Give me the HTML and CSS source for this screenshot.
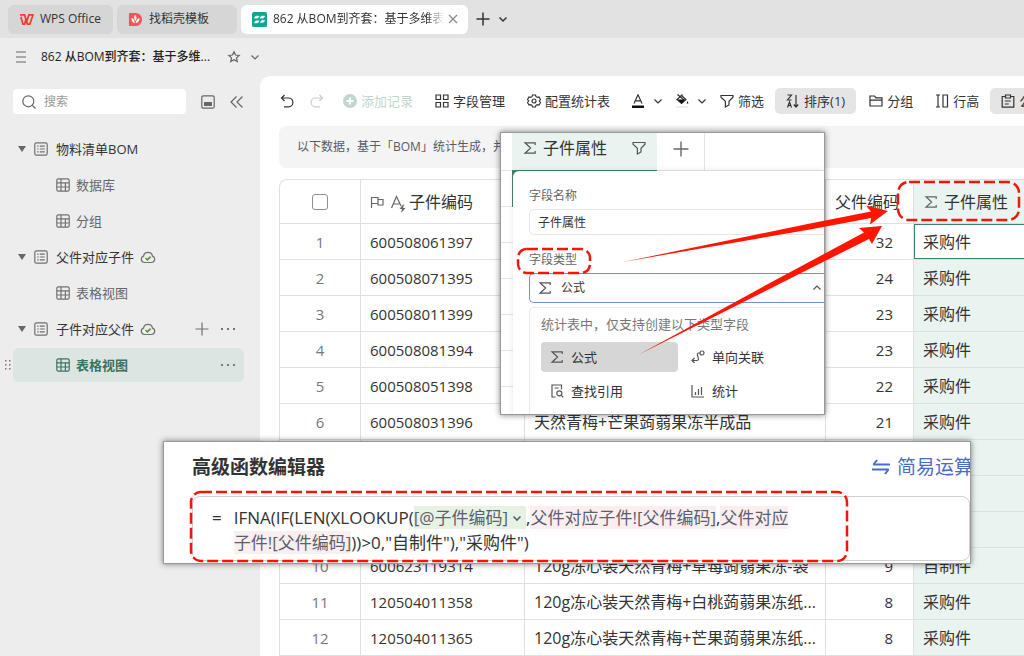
FILE: index.html
```
<!DOCTYPE html>
<html lang="zh-CN">
<head>
    <meta charset="UTF-8">
    <meta name="viewport" content="width=device-width, initial-scale=1.0">
    <title>862 从BOM到齐套：基于多维表格</title>
    <link rel="stylesheet" href="styles.css">
</head>
<body>
    <!-- shared icons -->
    <svg class="sprite" aria-hidden="true">
        <symbol id="i-sigma" viewBox="0 0 14 14"><path d="M12.2 4V1.8H2l5.6 5.2L2 12.2h10.2V10"/></symbol>
        <symbol id="i-down" viewBox="0 0 14 14"><path d="M3.5 5.5 7 9l3.5-3.5"/></symbol>
        <symbol id="i-filter" viewBox="0 0 14 14"><path d="M1 1.5h12v1.8L9 7.2V11l-3.6 2V7.2L1 3.3z"/></symbol>
        <symbol id="i-plus" viewBox="0 0 14 14"><path d="M7 0.5v13M0.5 7h13"/></symbol>
        <symbol id="i-sheet" viewBox="0 0 14 14"><rect x="0.8" y="0.8" width="12.4" height="12.4" rx="1.6"/><path d="M3.2 4.2h1.4M5.8 4.2h5M3.2 7h1.4M5.8 7h5M3.2 9.8h1.4M5.8 9.8h5"/></symbol>
        <symbol id="i-table" viewBox="0 0 14 14"><rect x="0.8" y="0.8" width="12.4" height="12.4" rx="1.6"/><path d="M1 4.8h12M1 9h12M5 1v12M9.4 5v8"/></symbol>
        <symbol id="i-cloud" viewBox="0 0 16 14"><path d="M4.5 12.5a3.3 3.3 0 0 1-1-6.4 4.6 4.6 0 0 1 9 0 3.3 3.3 0 0 1-1 6.4z"/><path class="tick" d="M5.6 8 7.4 9.8 10.6 6.6"/></symbol>
        <symbol id="i-dots" viewBox="0 0 14 14"><path class="fill" d="M0 6h2v2H0zM6 6h2v2H6zM12 6h2v2h-2z"/></symbol>
    </svg>

    <nav class="tabs">
        <a class="tab" href="#">
            <svg class="logo" viewBox="0 0 16 14"><path d="M1 2h5l2 8 2.500-8H15l-3.500 10H9L7.500 6 6 12H4.200L2 4" fill="none" stroke="#f43a2c" stroke-width="1.8" stroke-linejoin="round"/></svg>
            WPS Office
        </a>
        <a class="tab tab-docer" href="#">
            <svg class="logo" viewBox="0 0 16 16"><path d="M2 1h6a7 7 0 0 1 0 14H2a1 1 0 0 1-1-1V2a1 1 0 0 1 1-1z" fill="#f2545b"/><path d="M7.500 3c2 2 2 4 .5 6.500C6 7 6 5 7.500 3zM3.800 6.500c2 .5 3 2 3.500 5.500-2.500-.8-3.700-2.500-3.500-5.500zM12.200 6.500c.2 3-1.200 4.700-4 5.500 0-2.500 1.500-5 4-5.500z" fill="#fff"/></svg>
            找稻壳模板
        </a>
        <a class="tab tab-active" href="#">
            <svg class="logo" viewBox="0 0 16 16"><rect width="16" height="16" rx="2" fill="#0ea890"/><path d="M2.500 6.500 4 4.500h3.500L6 6.500zM8.500 6.500l1.500-2h3.500L12 6.500zM2.500 11.500l1.500-2h3.500l-1.500 2zM9 11l1.500-2h3L12 11z" fill="#fff" stroke="#fff" stroke-width=".8"/></svg>
            <span class="tab-title">862 从BOM到齐套：基于多维表格</span>
            <svg class="icon close" viewBox="0 0 14 14"><path d="M3 3l8 8M11 3l-8 8"/></svg>
        </a>
        <button class="bare" aria-label="新建"><svg class="icon dark"><use href="#i-plus"/></svg></button>
        <button class="bare" aria-label="更多"><svg class="icon dark"><use href="#i-down"/></svg></button>
    </nav>

    <header class="doc-bar">
        <button class="bare" aria-label="菜单"><svg class="icon" viewBox="0 0 14 14"><path d="M2 2h10M2 7h10M2 12h10"/></svg></button>
        <h1 class="doc-title">862 从BOM到齐套：基于多维...</h1>
        <button class="bare" aria-label="收藏"><svg class="icon" viewBox="0 0 14 14"><path d="M7 1.700 8.500 5l3.700.4-2.700 2.500.8 3.600L7 9.700l-3.300 1.800.8-3.600L1.800 5.400 5.500 5z"/></svg></button>
        <button class="bare" aria-label="展开"><svg class="icon"><use href="#i-down"/></svg></button>
    </header>

    <div class="workspace">
        <aside class="sidebar">
            <div class="search-row">
                <label class="search">
                    <svg class="icon" viewBox="0 0 14 14"><circle cx="6.300" cy="6.300" r="5.500"/><path d="M10.300 10.300 13.500 13.500"/></svg>
                    <input type="text" placeholder="搜索" aria-label="搜索">
                </label>
                <button class="bare" aria-label="面板"><svg class="icon" viewBox="0 0 14 14"><rect x="0.8" y="0.8" width="12.400" height="12.400" rx="1.500"/><path class="fill" d="M3 7h8v4H3z"/></svg></button>
                <button class="bare" aria-label="收起"><svg class="icon" viewBox="0 0 14 14"><path d="M6.500 1.500 1 7l5.500 5.500M12.500 1.500 7 7l5.500 5.500"/></svg></button>
            </div>
            <ul class="tree">
                <li class="node"><span class="caret"></span><svg class="icon"><use href="#i-sheet"/></svg><a href="#">物料清单BOM</a></li>
                <li class="node child"><svg class="icon"><use href="#i-table"/></svg><a href="#">数据库</a></li>
                <li class="node child"><svg class="icon"><use href="#i-table"/></svg><a href="#">分组</a></li>
                <li class="node"><span class="caret"></span><svg class="icon"><use href="#i-sheet"/></svg><a href="#">父件对应子件</a><svg class="icon cloud"><use href="#i-cloud"/></svg></li>
                <li class="node child"><svg class="icon"><use href="#i-table"/></svg><a href="#">表格视图</a></li>
                <li class="node"><span class="caret"></span><svg class="icon"><use href="#i-sheet"/></svg><a href="#">子件对应父件</a><svg class="icon cloud"><use href="#i-cloud"/></svg>
                    <span class="actions"><svg class="icon"><use href="#i-plus"/></svg><svg class="icon"><use href="#i-dots"/></svg></span></li>
                <li class="node child selected">
                    <svg class="handle" viewBox="0 0 6 10"><path d="M0 0h1.500v1.500H0zM4 0h1.500v1.500H4zM0 4h1.500v1.500H0zM4 4h1.500v1.500H4zM0 8h1.500v1.500H0zM4 8h1.500v1.500H4z" fill="#777"/></svg>
                    <svg class="icon"><use href="#i-table"/></svg><a href="#">表格视图</a>
                    <span class="actions"><svg class="icon gray"><use href="#i-dots"/></svg></span></li>
            </ul>
        </aside>

        <main class="main">
            <div class="toolbar">
                <button class="tool tool-icon" aria-label="撤销"><svg class="icon" viewBox="0 0 14 14"><path d="M4.500 1 1.500 4l3 3M1.500 4h7a4.300 4.300 0 0 1 0 8.800H4"/></svg></button>
                <button class="tool tool-icon faint" aria-label="重做"><svg class="icon" viewBox="0 0 14 14"><path d="M9.500 1l3 3-3 3M12.500 4h-7a4.300 4.300 0 0 0 0 8.800H10"/></svg></button>
                <button class="tool disabled"><svg class="icon" viewBox="0 0 14 14"><circle class="fill" cx="7" cy="7" r="7"/><path d="M7 3.500v7M3.500 7h7" stroke="#fff" stroke-width="1.800"/></svg>添加记录</button>
                <button class="tool"><svg class="icon" viewBox="0 0 14 14"><path d="M1 1h4.500v4.500H1zM8.500 1H13v4.500H8.500zM1 8.500h4.500V13H1zM8.500 8.500H13V13H8.500z"/></svg>字段管理</button>
                <button class="tool"><svg class="icon" viewBox="0 0 14 14"><path d="M5.500 1h3l.5 1.700 1.300.7 1.700-.4 1.500 2.500L12.300 7l1.200 1.500L12 11l-1.700-.4-1.300.7-.5 1.700h-3L5 11.300l-1.300-.7L2 11 .5 8.500 1.700 7 .5 5.500 2 3l1.700.4L5 2.700z"/><circle cx="7" cy="7" r="2"/></svg>配置统计表</button>
                <button class="tool tool-drop" aria-label="字体颜色"><svg class="icon" viewBox="0 0 14 14"><path d="M3 9.500 7 .8l4 8.700M4.300 6.800h5.400"/><path class="black" d="M1 11.500h12V14H1z"/></svg><svg class="icon"><use href="#i-down"/></svg></button>
                <button class="tool tool-drop" aria-label="填充颜色"><svg class="icon" viewBox="0 0 14 14"><path d="M2.500.5 9 6M7.500.5 2 5.500l4.500 4L11 5.500 6.500 1.500"/><path class="black" d="M2.500 5.500h8l-4 4zM12.500 7l1 2.500h-2z"/><path d="M1 13h12" stroke="#ddd"/></svg><svg class="icon"><use href="#i-down"/></svg></button>
                <button class="tool"><svg class="icon"><use href="#i-filter"/></svg>筛选</button>
                <button class="tool tool-on"><svg class="icon" viewBox="0 0 14 14"><path d="M1.500 1h4L1.500 6h4M1.500 13.500l2-5.500 2 5.500M2.200 11.500h2.600M10 1v12M7.800 10.500 10 13l2.200-2.500"/></svg>排序(1)</button>
                <button class="tool"><svg class="icon" viewBox="0 0 14 14"><path d="M1 12V2h4.500L7 3.800h6V12zM1 6.200h12"/></svg>分组</button>
                <button class="tool"><svg class="icon" viewBox="0 0 14 14"><path d="M1 1h4M3 1v12M1 13h4M8 1h4.500v12H8z"/></svg>行高</button>
                <button class="tool tool-on"><svg class="icon" viewBox="0 0 14 14"><path d="M4.500 2.500H1.200v10.700h11.600V2.500H9.500M4.500 1h5v3h-5zM3.800 7h6M3.800 10h4"/></svg>公式</button>
            </div>
            <p class="notice">以下数据，基于「BOM」统计生成，并</p>
            <div class="grid">
                <table>
                    <colgroup><col class="c-no"><col class="c-code"><col class="c-name"><col class="c-parent"><col></colgroup>
                    <thead>
                        <tr>
                            <th class="no"><input type="checkbox" aria-label="全选"></th>
                            <th><svg class="icon" viewBox="0 0 14 14"><path d="M1.500 13V2.500h6.500V8.500H1.500M8 4.500h5v5.500H8V8"/></svg><svg class="icon auto" viewBox="0 0 16 18"><path d="M1.500 13 6.500 1.500 11 11M3.300 9h6"/><path class="fill" d="M13 9.500 9.500 14h2.500l-1 4 4.500-5h-2.500l1-3.500z"/></svg>子件编码</th>
                            <th></th>
                            <th>父件编码</th>
                            <th class="attr"><svg class="icon"><use href="#i-sigma"/></svg>子件属性</th>
                        </tr>
                    </thead>
                    <tbody>
                        <tr><td class="no">1</td><td>600508061397</td><td></td><td class="num">32</td><td class="attr current">采购件</td></tr>
                        <tr><td class="no">2</td><td>600508071395</td><td></td><td class="num">24</td><td class="attr">采购件</td></tr>
                        <tr><td class="no">3</td><td>600508011399</td><td></td><td class="num">23</td><td class="attr">采购件</td></tr>
                        <tr><td class="no">4</td><td>600508081394</td><td></td><td class="num">23</td><td class="attr">采购件</td></tr>
                        <tr><td class="no">5</td><td>600508051398</td><td></td><td class="num">22</td><td class="attr">采购件</td></tr>
                        <tr><td class="no">6</td><td>600508031396</td><td>天然青梅+芒果蒟蒻果冻半成品</td><td class="num">21</td><td class="attr">采购件</td></tr>
                        <tr><td class="no"></td><td></td><td></td><td></td><td class="attr"></td></tr>
                        <tr><td class="no"></td><td></td><td></td><td></td><td class="attr"></td></tr>
                        <tr><td class="no"></td><td></td><td></td><td></td><td class="attr"></td></tr>
                        <tr><td class="no">10</td><td>600623119314</td><td>120g冻心装天然青梅+草莓蒟蒻果冻-袋</td><td class="num">9</td><td class="attr">自制件</td></tr>
                        <tr><td class="no">11</td><td>120504011358</td><td>120g冻心装天然青梅+白桃蒟蒻果冻纸...</td><td class="num">8</td><td class="attr">采购件</td></tr>
                        <tr><td class="no">12</td><td>120504011365</td><td>120g冻心装天然青梅+芒果蒟蒻果冻纸...</td><td class="num">8</td><td class="attr">采购件</td></tr>
                    </tbody>
                </table>
            </div>
        </main>
    </div>

    <!-- field settings -->
    <section class="panel field-panel">
        <div class="field-head">
            <div class="field-name"><svg class="icon"><use href="#i-sigma"/></svg>子件属性<svg class="icon push"><use href="#i-filter"/></svg></div>
            <button class="field-add" aria-label="添加字段"><svg class="icon"><use href="#i-plus"/></svg></button>
        </div>
        <div class="field-body">
            <form class="field-form">
                <label for="fname">字段名称</label>
                <input class="box" id="fname" type="text" value="子件属性">
                <label for="ftype">字段类型</label>
                <div class="box box-focus">
                    <svg class="icon"><use href="#i-sigma"/></svg>
                    <select id="ftype"><option>公式</option></select>
                    <svg class="icon up"><use href="#i-down"/></svg>
                </div>
                <div class="menu">
                    <p>统计表中，仅支持创建以下类型字段</p>
                    <div class="menu-grid">
                        <button type="button" class="on"><svg class="icon"><use href="#i-sigma"/></svg>公式</button>
                        <button type="button"><svg class="icon" viewBox="0 0 14 14"><circle cx="11" cy="3" r="2"/><path d="M9 3H7.500C4 3 10 10.500 6 10.500H1M3.500 8 1 10.500 3.500 13"/></svg>单向关联</button>
                        <button type="button"><svg class="icon" viewBox="0 0 14 14"><path d="M5.500 13H2V1h9.500v4.500M4.500 4h4"/><circle cx="9.300" cy="9.300" r="2.500"/><path d="M11.200 11.200 13.300 13.300"/></svg>查找引用</button>
                        <button type="button"><svg class="icon" viewBox="0 0 14 14"><path d="M1 1v12h12M4.500 8v3M7.500 5v6M10.500 3v8"/></svg>统计</button>
                    </div>
                </div>
            </form>
        </div>
    </section>

    <!-- formula editor -->
    <section class="panel formula-panel">
        <div class="formula-head">
            <h2>高级函数编辑器</h2>
            <a href="#"><svg class="swap" viewBox="0 0 20 18"><path d="M6 2 2.500 6.500H19M1 11.500h16.500L14 16"/></svg>简易运算</a>
        </div>
        <div class="formula-box">
            <span class="eq">=</span>
            <div class="formula">IFNA(IF(LEN(XLOOKUP(<span class="ref-green">[@子件编码]<svg class="icon"><use href="#i-down"/></svg></span>,<span class="ref-red">父件对应子件![父件编码]</span>,<span class="ref-red">父件对应<br>子件![父件编码]</span>))&gt;0,"自制件"),"采购件")</div>
        </div>
    </section>

    <!-- red marks -->
    <svg class="marks" width="1024" height="656" viewBox="0 0 1024 656" aria-hidden="true">
        <rect x="898" y="182" width="121" height="38" rx="11"/>
        <rect x="518" y="249" width="72" height="24" rx="9"/>
        <rect x="191" y="492" width="656" height="69" rx="10"/>
        <path d="M623 262 810 223.500 871 211.500 866 205.500 888 211 870 224.500 871 218 810 229.500z"/>
        <path d="M638 355 767 284.500 810 261.500 864 232.500 859 228 882 226 872 244 869 239 810 268.500z"/>
    </svg>
</body>
</html>
```
FILE: styles.css
```
* {
    box-sizing: border-box;
}

body {
    margin: 0;
    height: 100vh;
    display: flex;
    flex-direction: column;
    overflow: hidden;
    position: relative;
    font-family: "Open Sans", "Noto Sans CJK SC", sans-serif;
    font-size: 13px;
    line-height: 20px;
    color: #333;
    background: #ededed;
}

h1, h2, p, ul {
    margin: 0;
    padding: 0;
}

a {
    color: inherit;
    text-decoration: none;
}

button, input, select {
    font: inherit;
    color: inherit;
    border: 0;
    background: none;
    padding: 0;
    outline: none;
}

.sprite {
    position: absolute;
    width: 0;
    height: 0;
}

.icon {
    width: 14px;
    height: 14px;
    flex: none;
    fill: none;
    stroke: currentColor;
    stroke-width: 1.2;
}

.icon .fill, .fill {
    fill: currentColor;
    stroke: none;
}

.black {
    fill: #111;
    stroke: none;
}

.bare {
    display: flex;
    color: #666;
}

/* window tabs */
.tabs {
    display: flex;
    align-items: center;
    gap: 4px;
    height: 38px;
    flex: none;
    padding: 0 8px;
    background: #e2e2e2;
    font-size: 12px;
}

.tab {
    display: flex;
    align-items: center;
    gap: 6px;
    height: 29px;
    padding: 0 12px 0 11px;
    border-radius: 6px;
    background: #d6d6d6;
    white-space: nowrap;
}

.tab-docer {
    width: 120px;
}

.tab-active {
    width: 227px;
    padding-right: 8px;
    background: #fff;
}

.tab-title {
    flex: 1;
    overflow: hidden;
    -webkit-mask-image: linear-gradient(90deg, #000 90%, transparent);
    mask-image: linear-gradient(90deg, #000 90%, transparent);
}

.tab-active .close {
    margin-left: -4px;
    color: #888;
}

.tab-active + .bare {
    margin: 0 2px 0 4px;
}

.logo {
    width: 15px;
    height: 15px;
    flex: none;
}

.dark {
    color: #333;
    stroke-width: 1.5;
}

.doc-bar {
    display: flex;
    align-items: center;
    gap: 7px;
    height: 38px;
    flex: none;
    padding-left: 14px;
}

.doc-title {
    margin: 0 10px 0 6px;
    font-size: 12px;
    font-weight: 500;
    color: #222;
}

.workspace {
    display: flex;
    flex: 1;
    min-height: 0;
}

/* sidebar */
.sidebar {
    width: 260px;
    flex: none;
    padding: 13px 16px 0 13px;
}

.search-row {
    display: flex;
    align-items: center;
    gap: 15px;
}

.search {
    display: flex;
    align-items: center;
    gap: 8px;
    flex: 1;
    height: 25px;
    padding-left: 9px;
    border-radius: 4px;
    background: #fff;
    color: #666;
    font-size: 12px;
}

.search input {
    width: 100px;
}

.search input::placeholder {
    color: #999;
}

.tree {
    list-style: none;
    margin-top: 18px;
}

.node {
    display: flex;
    align-items: center;
    gap: 8px;
    height: 34px;
    margin-bottom: 2px;
    padding: 0 9px 0 5px;
    border-radius: 6px;
    position: relative;
}

.node .icon {
    color: #707070;
}

.node .cloud {
    width: 16px;
    margin-left: -2px;
}

.tick {
    stroke: #4f9a2f;
    stroke-width: 1.6;
}

.child {
    padding-left: 43px;
    gap: 6px;
    color: #666;
}

.selected {
    background: #dde5e2;
    color: #38735f;
    font-weight: 700;
}

.selected .icon {
    color: #38735f;
}

.node .icon.gray {
    color: #777;
}

.caret {
    border: 4px solid transparent;
    border-top: 6px solid #666;
    border-bottom: 0;
}

.actions {
    display: flex;
    gap: 12px;
    margin-left: auto;
}

.handle {
    position: absolute;
    left: -8px;
    width: 6px;
    height: 10px;
}

/* main area */
.main {
    flex: 1;
    min-width: 0;
    overflow: hidden;
    padding-left: 19px;
    border-radius: 10px 0 0 0;
    background: #fff;
}

.toolbar {
    display: flex;
    align-items: center;
    height: 50px;
    margin-left: -7px;
}

.tool {
    display: flex;
    align-items: center;
    flex: none;
    gap: 4px;
    height: 26px;
    padding: 0 11px;
    border-radius: 5px;
}

.tool-icon {
    padding: 0 8px;
}

.tool-drop {
    gap: 6px;
    padding: 0 0 0 10px;
}

.tool-on {
    background: #e5e5e5;
}

.tool-on + .tool {
    margin-left: 2px;
}

.disabled {
    color: #c0d6cf;
}

.faint {
    color: #ccc;
}

.notice {
    height: 42px;
    padding-left: 18px;
    border-radius: 8px 0 0 8px;
    background: #f4f4f4;
    color: #555b66;
    font-size: 12px;
    line-height: 42px;
}

.grid {
    margin-top: 11px;
    overflow: hidden;
    border: 1px solid #e0e0e0;
    border-width: 1px 0 0 1px;
    border-radius: 8px 0 0 0;
}

/* last column runs past the window edge */
table {
    width: calc(100% + 20px);
    table-layout: fixed;
    border-spacing: 0;
    font-size: 16px;
}

.c-no {
    width: 81px;
}

.c-code {
    width: 164px;
}

.c-name {
    width: 301px;
}

.c-parent {
    width: 88px;
}

th, td {
    height: 36px;
    padding: 0 0 0 9px;
    border: 1px solid #e0e0e0;
    border-width: 0 1px 1px 0;
    text-align: left;
    white-space: nowrap;
    line-height: 24px;
}

th {
    height: 44px;
    font-weight: 400;
}

th .icon {
    vertical-align: -1px;
    margin-right: 6px;
    color: #666;
}

th .auto {
    width: 16px;
    height: 18px;
    margin-right: 3px;
    vertical-align: -5px;
}

td:nth-child(2) {
    font-size: 15px;
}

.no {
    padding: 0;
    text-align: center;
    color: #777;
    font-size: 15px;
}

.no input {
    appearance: none;
    display: block;
    width: 16px;
    height: 16px;
    margin: 0 auto;
    border: 1px solid #8a8f99;
    border-radius: 3px;
}

.num {
    padding: 0 20px 0 0;
    text-align: right;
    font-size: 15px;
}

.attr {
    background: #e9f3f0;
    border-color: #d8e2df;
}

th.attr {
    padding-left: 10px;
}

td.current {
    background: #fff;
    box-shadow: inset 1px 1px 0 #3f806c, inset 0 -1px 0 #3f806c;
}

/* floating panels */
.panel {
    position: absolute;
    overflow: hidden;
    border: 1px solid #999;
    background: #fff;
    box-shadow: 0 0 6px rgba(0, 0, 0, 0.5);
}

.field-panel {
    left: 500px;
    top: 132px;
    width: 325px;
    height: 283px;
}

.field-head {
    display: flex;
    height: 38px;
    padding-left: 11px;
    border-bottom: 1px solid #e4e4e4;
}

.field-name {
    display: flex;
    align-items: center;
    gap: 6px;
    width: 145px;
    height: 38px;
    padding: 0 11px;
    padding-bottom: 7px;
    border-bottom: 1px solid #3f806c;
    background: #e9f3f0;
    font-size: 16px;
}

.field-name .icon {
    color: #555;
}

.push {
    margin-left: auto;
}

.field-add {
    display: flex;
    align-items: center;
    justify-content: center;
    width: 48px;
    padding-bottom: 6px;
    border-right: 1px solid #e4e4e4;
    color: #666;
}

.field-add .icon {
    width: 16px;
    height: 16px;
}

.field-body {
    position: relative;
    padding-left: 12px;
    background: repeating-linear-gradient(#fff 0 35px, #e4e4e4 35px 36px);
}

/* edge of the selected cell behind the form */
.field-body::before {
    content: "";
    position: absolute;
    left: 11px;
    top: 0;
    width: 8px;
    height: 36px;
    background: #3f806c;
}

.field-form {
    display: flex;
    flex-direction: column;
    position: relative;
    padding: 15px 0 0 16px;
    border-radius: 6px 0 0 0;
    background: #fff;
    box-shadow: 0 0 6px rgba(0, 0, 0, 0.1);
    font-size: 12px;
}

.field-form label {
    color: #666;
}

.box {
    display: flex;
    align-items: center;
    gap: 9px;
    height: 26px;
    margin: 3px 0 15px;
    padding: 0 0 0 8px;
    border: 1px solid #e6e6e6;
    border-right: 0;
    border-radius: 5px 0 0 5px;
}

.box-focus {
    height: 30px;
    margin-bottom: 4px;
    border-color: #6f8fd8;
}

.box select {
    appearance: none;
    flex: 1;
}

.box .icon {
    color: #555;
}

.up {
    transform: rotate(180deg);
}

.menu {
    height: 110px;
    padding: 6px 0 0 11px;
    border: 1px solid #eaeaea;
    border-width: 1px 0 0 1px;
    border-radius: 5px 0 0 0;
    font-size: 13px;
}

.menu p {
    color: #777;
}

.menu-grid {
    display: grid;
    grid-template-columns: 137px 1fr;
    grid-auto-rows: 30px;
    gap: 4px;
    margin-top: 8px;
}

.menu-grid button {
    display: flex;
    align-items: center;
    gap: 7px;
    padding-left: 9px;
    border-radius: 4px;
}

.menu-grid .icon {
    color: #555;
}

.menu-grid .on {
    background: #d6d6d6;
}

.formula-panel {
    left: 163px;
    top: 441px;
    width: 808px;
    height: 123px;
}

.formula-head {
    display: flex;
    align-items: center;
    justify-content: space-between;
    height: 54px;
    padding: 0 0 5px 28px;
    white-space: nowrap;
}

.formula-head h2 {
    font-size: 19px;
}

.formula-head a {
    display: flex;
    align-items: center;
    gap: 6px;
    margin-right: -3px;
    color: #4a6bc8;
    font-size: 19px;
}

.swap {
    width: 20px;
    height: 18px;
    fill: none;
    stroke: currentColor;
    stroke-width: 2;
    stroke-linejoin: bevel;
}

.formula-box {
    display: flex;
    gap: 12px;
    height: 65px;
    margin-left: 28px;
    padding: 8px 0 0 19px;
    border: 1px solid #d0d0d0;
    border-radius: 8px;
    font-size: 17px;
    line-height: 25px;
    white-space: nowrap;
}

.formula .icon {
    margin: 0 2px;
    vertical-align: -1px;
    stroke-width: 1.6;
}

.ref-green, .ref-red {
    color: #5a5f70;
}

.ref-green {
    background: #e8f2e2;
}

.ref-red {
    background: #fbeeee;
}

.marks {
    position: absolute;
    left: 0;
    top: 0;
}

.marks rect {
    fill: none;
    stroke: #f51408;
    stroke-width: 2.5;
    stroke-dasharray: 11 4;
}

.marks path {
    fill: #ff1500;
}
```
